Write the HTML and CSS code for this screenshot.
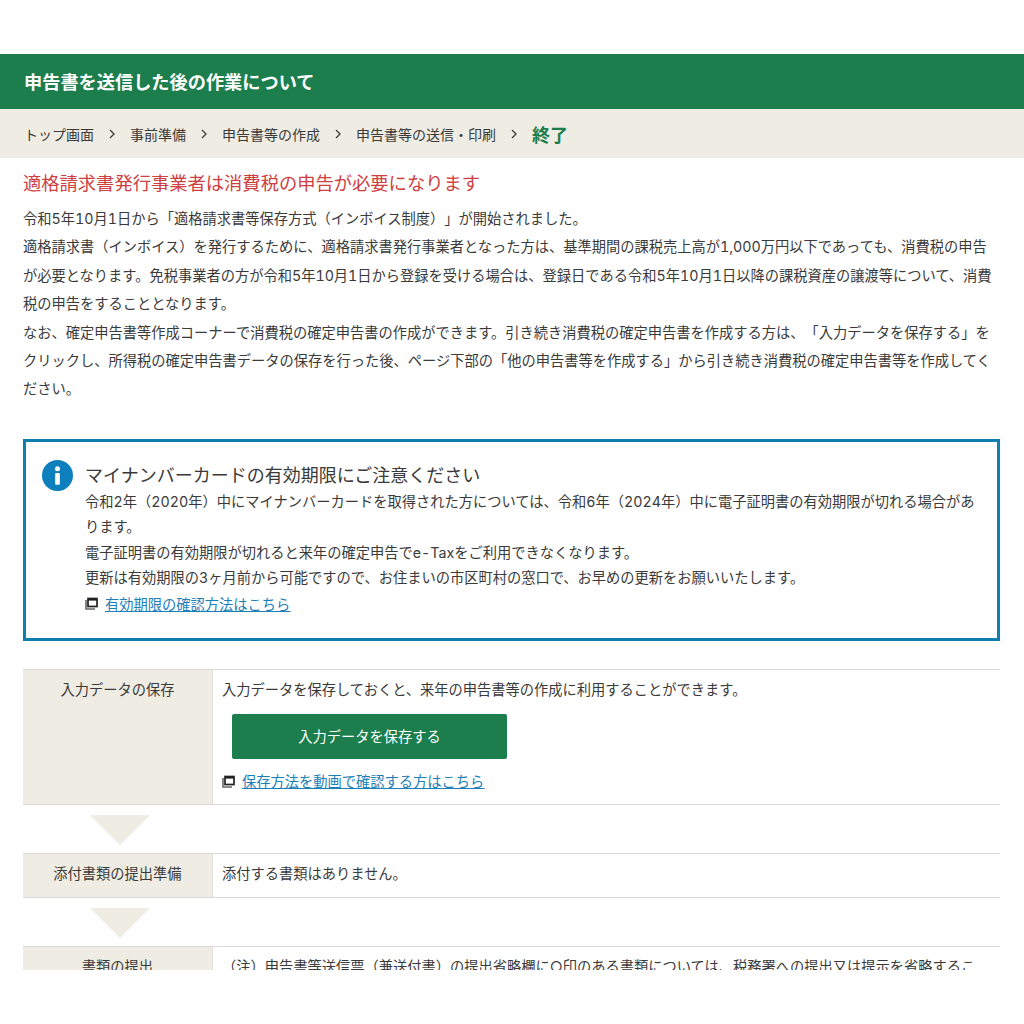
FILE: index.html
```html
<!DOCTYPE html>
<html lang="ja">
<head>
    <meta charset="UTF-8">
    <title>申告書を送信した後の作業について</title>
    <link rel="stylesheet" href="styles.css">
</head>
<body>
    <div class="page">
        <h1 class="title">申告書を送信した後の作業について</h1>
        <ol class="steps">
            <li>トップ画面</li>
            <li class="sep"><svg width="8" height="10" viewBox="0 0 8 10"><path d="M2 1l4 4-4 4" fill="none" stroke="#444" stroke-width="1.4"/></svg></li>
            <li>事前準備</li>
            <li class="sep"><svg width="8" height="10" viewBox="0 0 8 10"><path d="M2 1l4 4-4 4" fill="none" stroke="#444" stroke-width="1.4"/></svg></li>
            <li>申告書等の作成</li>
            <li class="sep"><svg width="8" height="10" viewBox="0 0 8 10"><path d="M2 1l4 4-4 4" fill="none" stroke="#444" stroke-width="1.4"/></svg></li>
            <li>申告書等の送信・印刷</li>
            <li class="sep"><svg width="8" height="10" viewBox="0 0 8 10"><path d="M2 1l4 4-4 4" fill="none" stroke="#444" stroke-width="1.4"/></svg></li>
            <li class="current">終了</li>
        </ol>

        <div class="content">
            <h2 class="notice-title">適格請求書発行事業者は消費税の申告が必要になります</h2>
            <p class="notice-text">
                令和5年10月1日から「適格請求書等保存方式（インボイス制度）」が開始されました。<br>
                適格請求書（インボイス）を発行するために、適格請求書発行事業者となった方は、基準期間の課税売上高が1,000万円以下であっても、消費税の申告<br>
                が必要となります。免税事業者の方が令和5年10月1日から登録を受ける場合は、登録日である令和5年10月1日以降の課税資産の譲渡等について、消費<br>
                税の申告をすることとなります。<br>
                なお、確定申告書等作成コーナーで消費税の確定申告書の作成ができます。引き続き消費税の確定申告書を作成する方は、「入力データを保存する」を<br>
                クリックし、所得税の確定申告書データの保存を行った後、ページ下部の「他の申告書等を作成する」から引き続き消費税の確定申告書等を作成してく<br>
                ださい。
            </p>

            <div class="info-box">
                <svg class="info-icon" width="31" height="31" viewBox="0 0 32 32">
                    <circle cx="16" cy="16" r="16" fill="#0d7fbd"/>
                    <circle cx="16" cy="9" r="2.6" fill="#fff"/>
                    <rect x="13.6" y="13.5" width="4.8" height="12" rx="1" fill="#fff"/>
                </svg>
                <div class="info-body">
                    <h3 class="info-title">マイナンバーカードの有効期限にご注意ください</h3>
                    <p class="info-text">
                        令和2年（2020年）中にマイナンバーカードを取得された方については、令和6年（2024年）中に電子証明書の有効期限が切れる場合があ<br>
                        ります。<br>
                        電子証明書の有効期限が切れると来年の確定申告でe-Taxをご利用できなくなります。<br>
                        更新は有効期限の3ヶ月前から可能ですので、お住まいの市区町村の窓口で、お早めの更新をお願いいたします。
                    </p>
                    <a class="ext-link" href="#">
                        <svg width="13" height="13" viewBox="0 0 13 13"><path d="M1 3v9h9" fill="none" stroke="#666" stroke-width="1.6"/><rect x="3" y="1.5" width="9" height="8" fill="#fff" stroke="#222" stroke-width="1.7"/><rect x="3" y="1" width="9" height="2.6" fill="#222"/></svg>
                        <span>有効期限の確認方法はこちら</span>
                    </a>
                </div>
            </div>

            <div class="row row-save">
                <div class="row-head">入力データの保存</div>
                <div class="row-body">
                    <p>入力データを保存しておくと、来年の申告書等の作成に利用することができます。</p>
                    <button class="save-btn">入力データを保存する</button>
                    <a class="ext-link" href="#">
                        <svg width="13" height="13" viewBox="0 0 13 13"><path d="M1 3v9h9" fill="none" stroke="#666" stroke-width="1.6"/><rect x="3" y="1.5" width="9" height="8" fill="#fff" stroke="#222" stroke-width="1.7"/><rect x="3" y="1" width="9" height="2.6" fill="#222"/></svg>
                        <span>保存方法を動画で確認する方はこちら</span>
                    </a>
                </div>
            </div>
            <div class="arrow"></div>
            <div class="row row-attach">
                <div class="row-head">添付書類の提出準備</div>
                <div class="row-body">添付する書類はありません。</div>
            </div>
            <div class="arrow"></div>
            <div class="row row-submit">
                <div class="row-head">書類の提出</div>
                <div class="row-body">（注）申告書等送信票（兼送付書）の提出省略欄に○印のある書類については、税務署への提出又は提示を省略するこ</div>
            </div>
        </div>
    </div>
</body>
</html>
```

FILE: styles.css
```css
* {
    margin: 0;
    padding: 0;
    box-sizing: border-box;
}

body {
    background: #fff;
    color: #3a3a3a;
    font-family: Inter, "Noto Sans CJK JP", "Noto Sans", sans-serif;
    font-size: 14.25px;
    font-variant-numeric: tabular-nums;
    text-spacing-trim: space-all;
}

.page {
    margin-top: 54px;
    height: 916px;
    overflow: hidden;
}

.title {
    background: #1c7e4d;
    color: #fff;
    height: 55px;
    line-height: 56px;
    padding-left: 24px;
    font-size: 18.2px;
    font-weight: 700;
}

.steps {
    list-style: none;
    display: flex;
    align-items: center;
    gap: 15px;
    height: 49px;
    padding: 1px 0 0 24px;
    background: #efece3;
    font-size: 14px;
}

.steps .sep {
    display: flex;
    margin: 0 -1px;
}

.steps .current {
    color: #1c7e4d;
    font-size: 18px;
    font-weight: 700;
}

.content {
    padding: 0 24px 0 23px;
}

.notice-title {
    margin-top: 12px;
    color: #cf3f3f;
    font-size: 18.3px;
    font-weight: 400;
    line-height: 26px;
}

.notice-text {
    margin-top: 9px;
    line-height: 28.4px;
    white-space: nowrap;
}

.info-box {
    display: flex;
    gap: 12px;
    height: 202px;
    margin-top: 35px;
    padding: 20px 16px 0 16px;
    border: 3px solid #0f7fb0;
}

.info-icon {
    flex-shrink: 0;
    margin-top: -2px;
}

.info-title {
    font-size: 18px;
    font-weight: 400;
    line-height: 27px;
}

.info-text {
    line-height: 25.5px;
    white-space: nowrap;
}

.ext-link {
    display: flex;
    align-items: center;
    gap: 7px;
    height: 26px;
}

.ext-link span {
    color: #1c7fb8;
    text-decoration: underline;
}

.row {
    display: flex;
    border-top: 1px solid #d9d9d9;
    border-bottom: 1px solid #d9d9d9;
}

.row-save {
    height: 136px;
    margin-top: 28px;
}

.row-attach {
    height: 45px;
}

.row-submit {
    height: 60px;
}

.row-head {
    width: 190px;
    flex-shrink: 0;
    background: #efece3;
    border-right: 1px solid #e2e0d8;
    text-align: center;
    line-height: 40px;
}

.row-body {
    flex: 1;
    padding-left: 9px;
    line-height: 40px;
}

.save-btn {
    display: block;
    width: 275px;
    height: 45px;
    margin: 4px 0 0 10px;
    padding-bottom: 2px;
    border: none;
    border-radius: 2px;
    background: #1c7e4d;
    color: #fff;
    font-family: inherit;
    font-size: 14.25px;
}

.row-body .ext-link {
    margin-top: 10px;
    line-height: 26px;
}

.arrow {
    width: 0;
    height: 0;
    margin: 10px 0 8px 67px;
    border-left: 30px solid transparent;
    border-right: 30px solid transparent;
    border-top: 30px solid #efece3;
}
```
